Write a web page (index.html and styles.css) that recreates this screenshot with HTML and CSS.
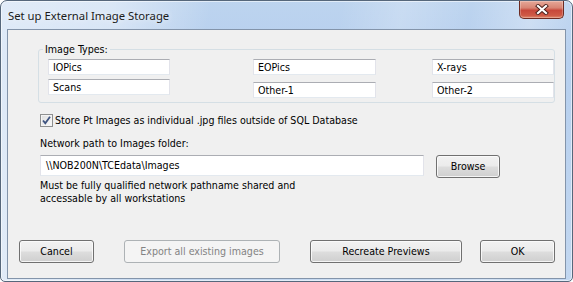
FILE: index.html
```html
<!DOCTYPE html>
<html>
<head>
<meta charset="utf-8">
<link rel="stylesheet" href="styles.css">
</head>
<body>
<div class="window">
  <div class="titlebar">
    <span class="title">Set up External Image Storage</span>
    <div class="close">
      <svg width="14" height="11" viewBox="0 0 14 11">
        <path d="M3 2 L11 9 M11 2 L3 9" stroke="#4a1f1a" stroke-width="4" stroke-linecap="square" fill="none"/>
        <path d="M3 2 L11 9 M11 2 L3 9" stroke="#ffffff" stroke-width="2.2" stroke-linecap="square" fill="none"/>
      </svg>
    </div>
  </div>
  <div class="client">
    <fieldset class="group">
      <legend>Image Types:</legend>
      <div class="types">
        <div class="col col1">
          <div class="tb">IOPics</div>
          <div class="tb">Scans</div>
        </div>
        <div class="col col2">
          <div class="tb">EOPics</div>
          <div class="tb">Other-1</div>
        </div>
        <div class="col col3">
          <div class="tb">X-rays</div>
          <div class="tb">Other-2</div>
        </div>
      </div>
    </fieldset>
    <div class="check">
      <span class="box">
        <svg width="11" height="11" viewBox="0 0 11 11">
          <path d="M2 5.5 L4.3 8.2 L9 1.8" stroke="#3f5480" stroke-width="1.8" fill="none"/>
        </svg>
      </span>
      <span>Store Pt Images as individual .jpg files outside of SQL Database</span>
    </div>
    <div class="label">Network path to Images folder:</div>
    <div class="pathrow">
      <div class="tb path">\\NOB200N\TCEdata\Images</div>
      <div class="btn browse">Browse</div>
    </div>
    <div class="hint">Must be fully qualified network pathname shared and<br>accessable by all workstations</div>
    <div class="buttons">
      <div class="btn cancel">Cancel</div>
      <div class="btn export disabled">Export all existing images</div>
      <div class="btn recreate">Recreate Previews</div>
      <div class="btn ok">OK</div>
    </div>
  </div>
</div>
</body>
</html>
```

FILE: styles.css
```css
* { box-sizing: border-box; }
html, body { margin: 0; padding: 0; }
body {
  width: 573px;
  height: 282px;
  overflow: hidden;
  background: #ffffff;
  font-family: "DejaVu Sans Condensed", "DejaVu Sans", sans-serif;
  font-size: 10.6px;
  color: #000;
}
.window {
  width: 573px;
  height: 282px;
  border: 1px solid #56677b;
  border-radius: 7px 7px 5px 5px;
  padding: 0 6px 2px 6px;
  display: flex;
  flex-direction: column;
  box-shadow: inset 0 0 0 1px rgba(255,255,255,0.55);
  background:
    linear-gradient(100deg, rgba(255,255,255,0.55) 0%, rgba(255,255,255,0.45) 18%, rgba(255,255,255,0) 34%, rgba(255,255,255,0) 55%, rgba(255,255,255,0.2) 65%, rgba(255,255,255,0) 76%, rgba(255,255,255,0.28) 86%, rgba(255,255,255,0) 94%),
    linear-gradient(to bottom, #bdd4ef 0%, #b6cfee 20%, #c2d7f0 100%);
}
.titlebar {
  height: 28px;
  display: flex;
  align-items: center;
}
.title {
  font-family: "Noto Sans", "Open Sans", sans-serif;
  font-size: 11.3px;
  color: #1b1b1b;
  padding-left: 1px;
  padding-top: 1px;
  text-shadow: 0 0 6px rgba(255,255,255,0.9);
}
.close {
  margin-left: auto;
  margin-right: 2px;
  align-self: flex-start;
  width: 45px;
  height: 18px;
  border: 1px solid #6d2b22;
  border-top: none;
  border-radius: 0 0 5px 5px;
  background: linear-gradient(to bottom, #e6a898 0%, #d88574 40%, #c7483a 55%, #cf5a46 85%, #e08b6e 100%);
  box-shadow: inset 0 0 0 1px rgba(255,255,255,0.25);
  display: flex;
  align-items: center;
  justify-content: center;
}
.client {
  flex: 1;
  border: 1px solid #8394aa;
  background: #f0f0f0;
  display: flex;
  flex-direction: column;
  align-items: flex-start;
}
.group {
  margin: 13px 0 0 30px;
  width: 517px;
  padding: 3px 0 4px 9px;
  border: 1px solid #d5dfe5;
  border-radius: 3px;
  min-inline-size: 0;
}
.group legend {
  margin-left: -5px;
  padding: 0 2px;
  line-height: 13px;
}
.types {
  display: flex;
}
.col {
  display: flex;
  flex-direction: column;
}
.col1 { width: 122px; gap: 4px; }
.col2 { width: 123px; gap: 7px; margin-left: 83px; }
.col3 { width: 122px; gap: 7px; margin-left: 56px; }
.tb {
  height: 16px;
  background: #ffffff;
  border: 1px solid #e2e3ea;
  border-top-color: #abadb3;
  border-bottom-color: #e3e9ef;
  padding-left: 4px;
  line-height: 14px;
  white-space: nowrap;
}
.check {
  margin: 11px 0 0 32px;
  height: 13px;
  display: flex;
  align-items: center;
  gap: 2px;
  line-height: 13px;
}
.box {
  width: 13px;
  height: 13px;
  border: 1px solid #8e8f8f;
  background: linear-gradient(135deg, #dcdcdc, #fbfbfb);
  box-shadow: inset 0 0 0 1px #f4f4f4;
  display: flex;
  align-items: center;
  justify-content: center;
}
.label {
  margin: 10px 0 0 32px;
  line-height: 13px;
}
.pathrow {
  margin: 5px 0 0 32px;
  display: flex;
  align-items: flex-start;
}
.path {
  width: 384px;
  height: 21px;
  line-height: 19px;
  padding-left: 5px;
}
.btn {
  height: 23px;
  border: 1px solid #707070;
  border-radius: 3px;
  background: linear-gradient(to bottom, #f2f2f2 0%, #ebebeb 48%, #dddddd 52%, #cfcfcf 100%);
  box-shadow: inset 0 0 0 1px rgba(252,252,252,0.85);
  display: flex;
  align-items: center;
  justify-content: center;
  line-height: 13px;
  white-space: nowrap;
}
.browse { width: 64px; margin-left: 12px; }
.hint {
  margin: 1px 0 0 32px;
  line-height: 13px;
}
.buttons {
  margin: 35px 0 0 11px;
  display: flex;
}
.cancel { width: 75px; }
.export { width: 156px; margin-left: 30px; }
.recreate { width: 152px; margin-left: 30px; }
.ok { width: 75px; margin-left: 18px; }
.btn.disabled {
  border-color: #adb2b5;
  background: #f4f4f4;
  box-shadow: none;
  color: #838383;
}
```
